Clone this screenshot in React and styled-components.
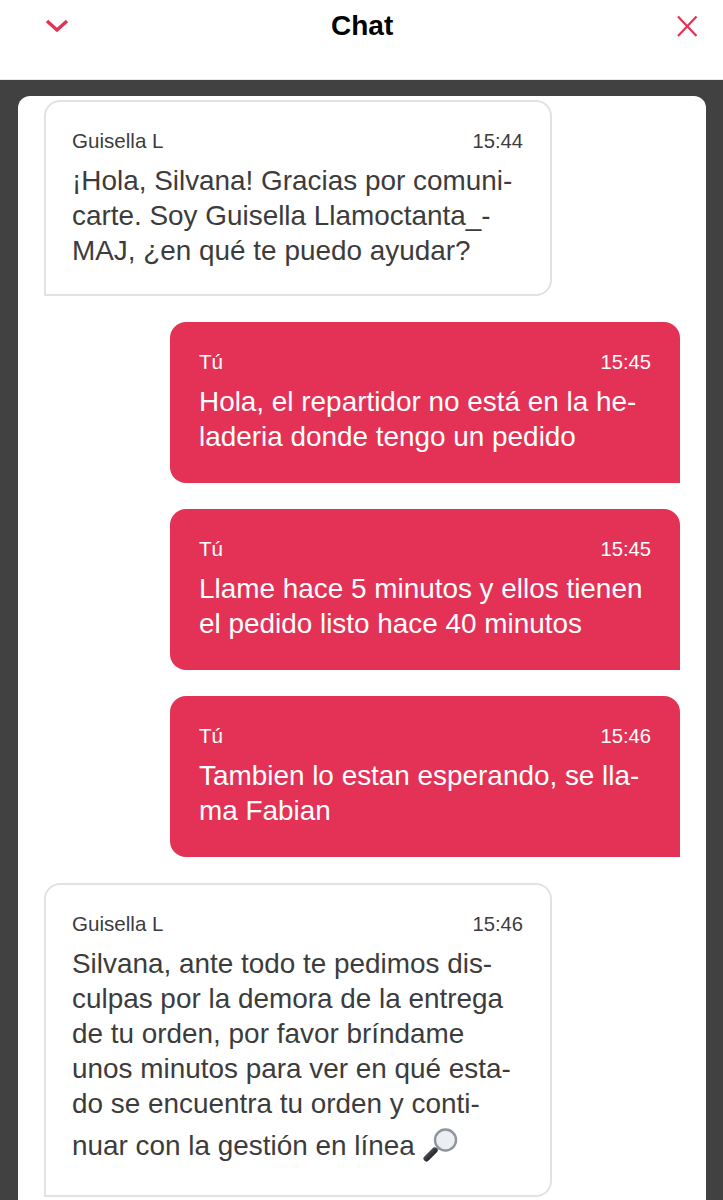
import React from "react";
import styled, { createGlobalStyle } from "styled-components";

const GlobalStyle = createGlobalStyle`
  html, body {
    margin: 0;
    padding: 0;
    background: #414141;
    font-family: "Liberation Sans", Arial, sans-serif;
  }
`;

const mensajes = [
  {
    id: 1,
    mine: false,
    name: "Guisella L",
    time: "15:44",
    lines: ["¡Hola, Silvana! Gracias por comuni-", "carte. Soy Guisella Llamoctanta_-", "MAJ, ¿en qué te puedo ayudar?"],
  },
  {
    id: 2,
    mine: true,
    name: "Tú",
    time: "15:45",
    lines: ["Hola, el repartidor no está en la he-", "laderia donde tengo un pedido"],
  },
  {
    id: 3,
    mine: true,
    name: "Tú",
    time: "15:45",
    lines: ["Llame hace 5 minutos y ellos tienen", "el pedido listo hace 40 minutos"],
  },
  {
    id: 4,
    mine: true,
    name: "Tú",
    time: "15:46",
    lines: ["Tambien lo estan esperando, se lla-", "ma Fabian"],
  },
  {
    id: 5,
    mine: false,
    name: "Guisella L",
    time: "15:46",
    lines: [
      "Silvana, ante todo te pedimos dis-",
      "culpas por la demora de la entrega",
      "de tu orden, por favor bríndame",
      "unos minutos para ver en qué esta-",
      "do se encuentra tu orden y conti-",
      "nuar con la gestión en línea",
    ],
    lupa: true,
  },
];

const Lupa = () => (
  <LupaIcon viewBox="0 0 36 36">
    <defs>
      <linearGradient id="mango" x1="0" y1="0" x2="1" y2="1">
        <stop offset="0" stopColor="#5a5f66" />
        <stop offset="1" stopColor="#111215" />
      </linearGradient>
    </defs>
    <path d="M13 21 L15 23" stroke="#8b8f94" strokeWidth="4" />
    <path d="M11.5 23.5 L3.5 31.5" stroke="url(#mango)" strokeWidth="6" strokeLinecap="round" />
    <circle cx="22.5" cy="13" r="10.5" fill="#eceef2" stroke="#8e959c" strokeWidth="2.4" />
  </LupaIcon>
);

const App = () => (
  <Page>
    <GlobalStyle />
    <Header>
      <CloseSlot>
        <svg width="26" height="16" viewBox="0 0 26 16">
          <path d="M3 3 L13 12 L23 3" fill="none" stroke="#e43256" strokeWidth="3.4" />
        </svg>
      </CloseSlot>
      <Title>Chat</Title>
      <CloseSlot $end>
        <svg width="24" height="24" viewBox="0 0 24 24">
          <path d="M3 2.5 L21.5 22 M21.5 2.5 L3 22" fill="none" stroke="#e43256" strokeWidth="2.2" />
        </svg>
      </CloseSlot>
    </Header>
    <Panel>
      {mensajes.map(m => (
        <Bubble key={m.id} $mine={m.mine}>
          <Meta>
            <Name>{m.name}</Name>
            <Time>{m.time}</Time>
          </Meta>
          <Body>
            {m.lines.map((line, i) => {
              const conLupa = m.lupa && i === m.lines.length - 1;
              return (
                <Line key={i} $tall={conLupa}>
                  {line}
                  {conLupa && <Lupa />}
                </Line>
              );
            })}
          </Body>
        </Bubble>
      ))}
    </Panel>
  </Page>
);

const Page = styled.div`
  width: 723px;
  height: 1200px;
  overflow: hidden;
  background: #414141;
`;

const Header = styled.header`
  box-sizing: border-box;
  height: 80px;
  background: #fff;
  padding: 9px 24px 0 44px;
  display: grid;
  grid-template-columns: 1fr 61px 1fr;
  align-items: start;
  border-bottom: 1px solid #e8e8e8;
`;

const CloseSlot = styled.div`
  height: 34px;
  display: flex;
  align-items: center;
  justify-content: ${p => (p.$end ? "flex-end" : "flex-start")};
`;

const Title = styled.h1`
  margin: 0 0 0 -10px;
  font-size: 28px;
  line-height: 34px;
  font-weight: 700;
  color: #000;
  white-space: nowrap;
`;

const Panel = styled.main`
  box-sizing: border-box;
  height: 1200px;
  margin: 16px 17px 0 18px;
  padding: 4px 26px 0;
  background: #fff;
  border-radius: 12px 12px 0 0;
  display: flex;
  flex-direction: column;
  gap: 26px;
`;

const Bubble = styled.section`
  box-sizing: border-box;
  width: ${p => (p.$mine ? "510px" : "508px")};
  align-self: ${p => (p.$mine ? "flex-end" : "flex-start")};
  padding: ${p => (p.$mine ? "28px 29px 29px" : "27px 27px 26px 26px")};
  background: ${p => (p.$mine ? "#e43256" : "#fff")};
  color: ${p => (p.$mine ? "#fff" : "#3c3c3c")};
  border: ${p => (p.$mine ? "none" : "2px solid #e2e2e2")};
  border-radius: ${p => (p.$mine ? "16px 16px 0 16px" : "16px 16px 16px 0")};
`;

const Meta = styled.div`
  display: flex;
  justify-content: space-between;
  line-height: 24px;
  margin-bottom: 10px;
`;

const Name = styled.span`
  font-size: 20.6px;
`;

const Time = styled.span`
  font-size: 20.2px;
`;

const Body = styled.div`
  font-size: 27.9px;
  line-height: 35px;
`;

const Line = styled.div`
  white-space: nowrap;
  display: flex;
  align-items: center;
  height: ${p => (p.$tall ? "48px" : "35px")};
`;

const LupaIcon = styled.svg`
  width: 36px;
  height: 36px;
  margin: 0 0 0 8px;
`;

export default App;
